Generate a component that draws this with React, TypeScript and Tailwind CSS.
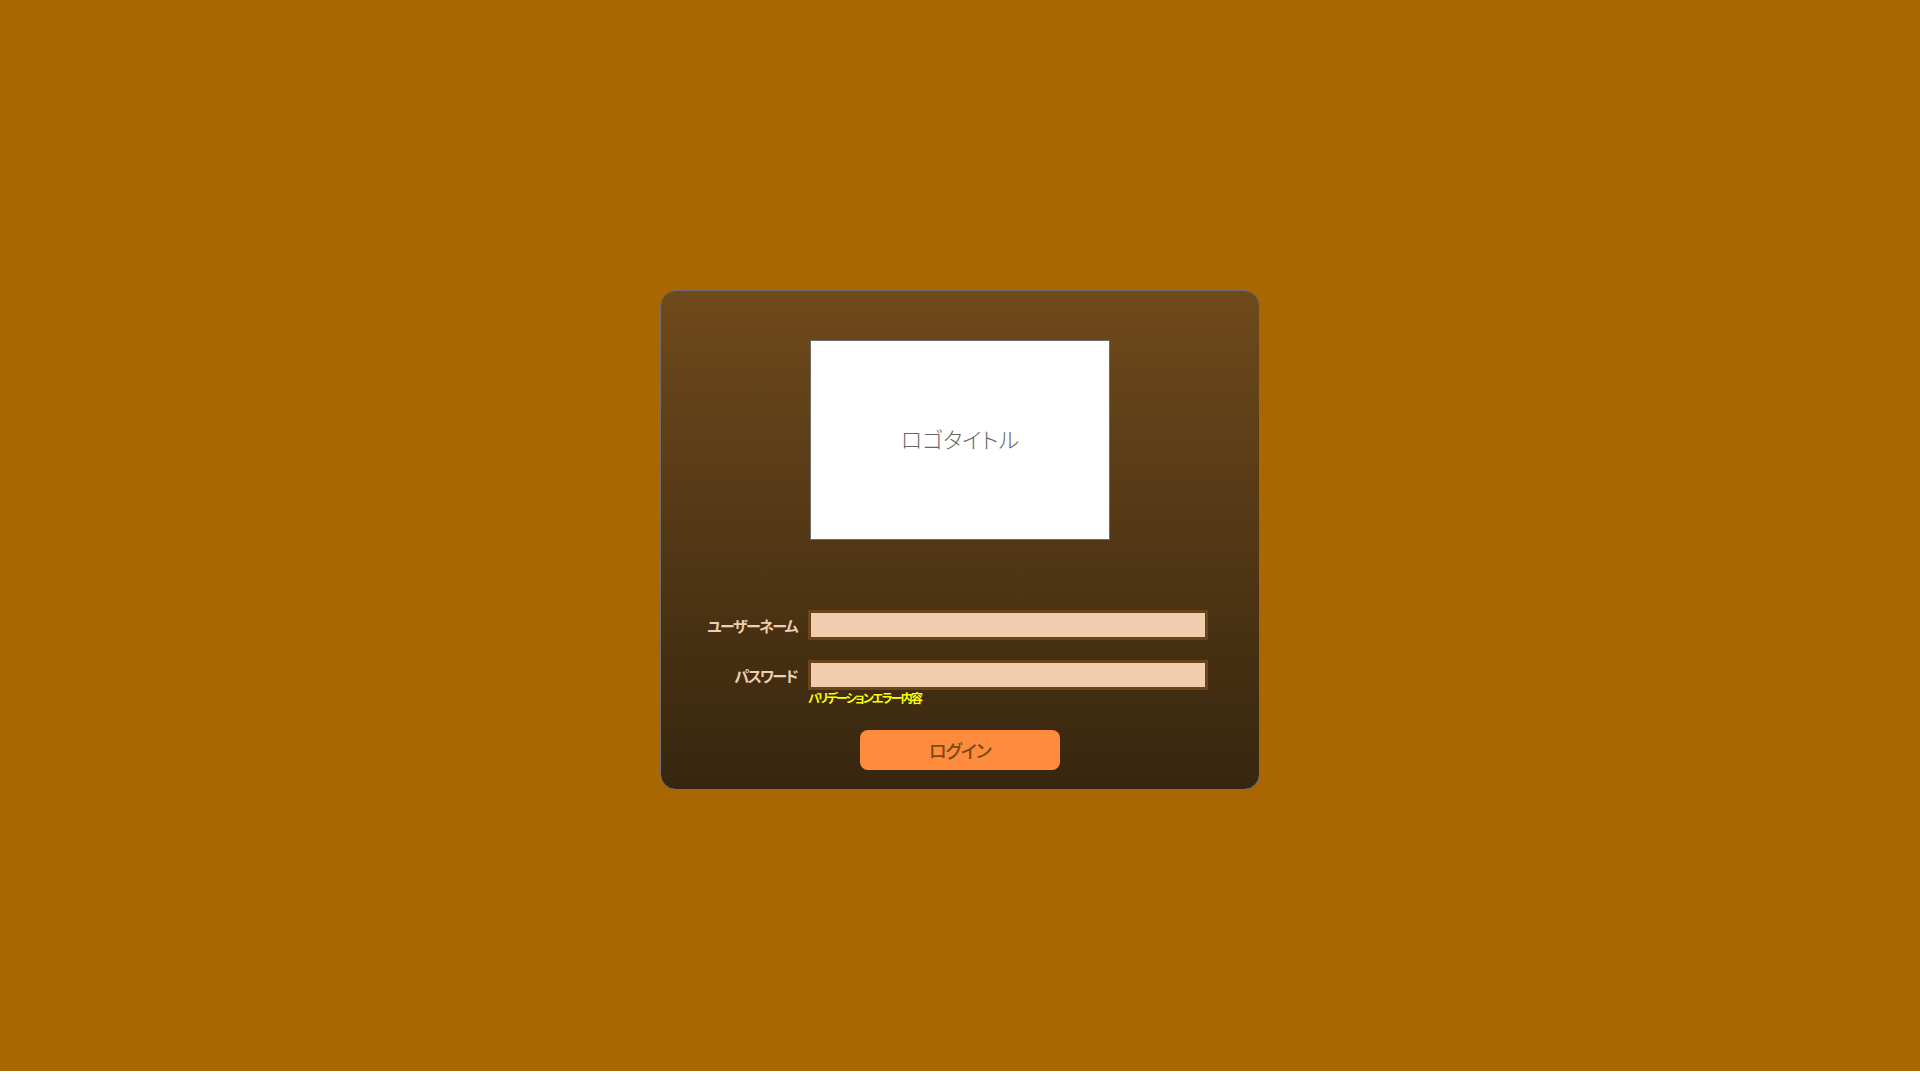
import React from "react";

export default function App() {
  return (
    <div
      className="w-full h-[1071px] bg-[#aa6600] flex justify-center pt-[290px] [font-feature-settings:'palt']"
      style={{ fontFamily: '"Noto Sans CJK JP", "Noto Sans", sans-serif' }}
    >
      <div className="w-[600px] h-[500px] rounded-2xl border border-[#6e6e6e] bg-gradient-to-b from-[#6f4a1b] to-[#37260f] flex flex-col items-center pt-[49px]">
        <div className="w-[300px] h-[200px] bg-white border border-[#6e6e6e] flex items-center justify-center pb-[5px]">
          <span className="text-[22px] font-light text-[#666666] tracking-[0px] leading-none">ロゴタイトル</span>
        </div>
        <div className="w-full mt-[70px] flex flex-col gap-[20px]">
          <div className="flex items-center pl-[38px]">
            <div className="w-[100px] flex justify-end pr-[2px]">
              <span className="whitespace-nowrap text-[15px] font-bold text-[#efcfb0] leading-none tracking-[-1.6px]">ユーザーネーム</span>
            </div>
            <input className="ml-[9px] w-[400px] h-[30px] bg-[#f0cdad] border-[3px] border-[#6b4519] outline-none" />
          </div>
          <div className="flex flex-col pl-[38px]">
            <div className="flex items-center">
              <div className="w-[100px] flex justify-end pr-[2px]">
                <span className="whitespace-nowrap text-[15px] font-bold text-[#efcfb0] leading-none tracking-[-1.6px]">パスワード</span>
              </div>
              <input type="password" className="ml-[9px] w-[400px] h-[30px] bg-[#f0cdad] border-[3px] border-[#6b4519] outline-none" />
            </div>
            <div className="ml-[109px] mt-[1px] whitespace-nowrap text-[12px] font-bold text-[#ffff00] leading-[14px] tracking-[-1.8px]">バリデーションエラー内容</div>
          </div>
        </div>
        <button className="mt-[25px] w-[200px] h-[40px] rounded-lg bg-[#ff8c3c] text-[18px] font-medium text-[#7a4a16] tracking-[-1px] flex items-center justify-center">
          ログイン
        </button>
      </div>
    </div>
  );
}
